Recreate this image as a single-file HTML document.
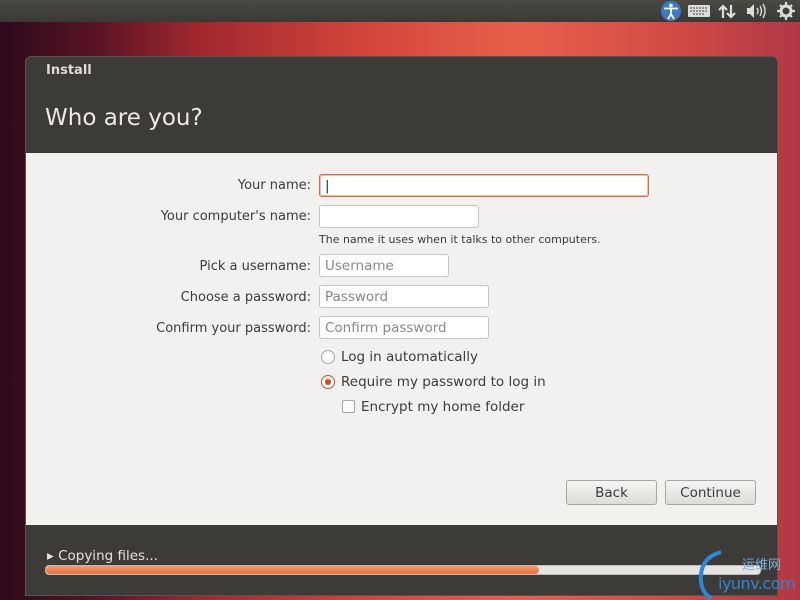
<!DOCTYPE html>
<html><head><style>
*{box-sizing:border-box;margin:0;padding:0}
body{width:800px;height:600px;overflow:hidden;position:relative;font-family:"DejaVu Sans","Liberation Sans",sans-serif;background:linear-gradient(90deg,#2c0a1c 0%,#5a1423 12%,#a0282e 25%,#d2453a 45%,#e8604a 65%,#d04a45 85%,#b03845 100%)}
.panel{position:absolute;left:0;top:0;width:800px;height:22px;background:linear-gradient(#4a4944,#3a3935);}
.win{position:absolute;left:25px;top:56px;width:753px;height:540px;background:#3c3b37;border-radius:6px 6px 0 0;border:1px solid #55544f}
.t1{position:absolute;left:20px;top:6px;color:#dfdbd2;font-weight:bold;font-size:13px}
.t2{position:absolute;left:19px;top:48px;color:#eeeae3;font-size:23px}
.content{position:absolute;left:0;top:96px;width:751px;height:372px;background:#f2f1f0}
.lbl{position:absolute;right:466px;font-size:13px;color:#3c3c3c;white-space:nowrap}
.inp{position:absolute;left:293px;height:23px;background:#fff;border:1px solid #c8c6c2;border-radius:3px;font-size:13.5px;color:#8a8a8a;padding:3px 0 0 5px}
.txt{position:absolute;font-size:13.5px;color:#3c3c3c;white-space:nowrap}
.rad{position:absolute;width:14px;height:14px;border-radius:50%;border:1px solid #a8a6a2;background:#fafafa}
.btn{position:absolute;height:25px;border:1px solid #a8a6a2;border-radius:3px;background:linear-gradient(#f6f5f4,#dedcd8);font-size:13.5px;color:#3c3c3c;text-align:center;padding-top:4px}
</style></head><body>
<div class="panel">
<svg width="800" height="22" style="position:absolute;left:0;top:0">
<circle cx="671" cy="11" r="10" fill="#3d78c4"/><circle cx="671" cy="5.5" r="1.8" fill="#fff"/><path d="M664 8.5h14M671 8.5v6M671 14l-3 5M671 14l3 5" stroke="#fff" stroke-width="1.8" fill="none"/>
<rect x="688" y="5" width="22" height="12" rx="1" fill="#dcdcdc"/><path d="M690 8h18M690 11h18M693 14h12" stroke="#444" stroke-width="1" stroke-dasharray="2 1"/>
<path d="M723 18V6M719 10l4-4 4 4M731 5v12M727 13l4 4 4-4" stroke="#ddd" stroke-width="2.2" fill="none"/>
<path d="M747 8h3l4-4v14l-4-4h-3z" fill="#ddd"/><path d="M757 8q2 3 0 6M760 6q3 5 0 10M763 4q4 7 0 14" stroke="#ddd" stroke-width="1.4" fill="none"/>
<circle cx="786" cy="11" r="5" fill="none" stroke="#ddd" stroke-width="3"/><path d="M786 2v4M786 16v4M777 11h4M791 11h4M780 5l2.5 2.5M792 17l-2.5-2.5M792 5l-2.5 2.5M780 17l2.5-2.5" stroke="#ddd" stroke-width="2.2"/>
</svg></div>
<div class="win">
<div class="t1">Install</div>
<div class="t2">Who are you?</div>
<div class="content">
<div class="lbl" style="top:25px">Your name:</div>
<div class="inp" style="top:21px;width:330px;border-color:#d66a43;box-shadow:0 0 0 1px #f0c0a8 inset;color:#333">|</div>
<div class="lbl" style="top:56px">Your computer's name:</div>
<div class="inp" style="top:52px;width:160px"></div>
<div class="txt" style="left:293px;top:80px;font-size:11px">The name it uses when it talks to other computers.</div>
<div class="lbl" style="top:106px">Pick a username:</div>
<div class="inp" style="top:101px;width:130px">Username</div>
<div class="lbl" style="top:137px">Choose a password:</div>
<div class="inp" style="top:132px;width:170px">Password</div>
<div class="lbl" style="top:168px">Confirm your password:</div>
<div class="inp" style="top:163px;width:170px">Confirm password</div>
<div class="rad" style="left:295px;top:197px"></div><div class="txt" style="left:315px;top:196px">Log in automatically</div>
<div class="rad" style="left:295px;top:222px;border-color:#c0502a;background:#fff"><div style="position:absolute;left:3px;top:3px;width:6px;height:6px;border-radius:50%;background:#dd4814"></div></div><div class="txt" style="left:315px;top:221px">Require my password to log in</div>
<div style="position:absolute;left:316px;top:247px;width:13px;height:13px;border:1px solid #a8a6a2;border-radius:2px;background:#fafafa"></div><div class="txt" style="left:335px;top:246px">Encrypt my home folder</div>
<div class="btn" style="left:540px;top:327px;width:91px">Back</div>
<div class="btn" style="left:639px;top:327px;width:91px">Continue</div>
</div>
<div class="txt" style="left:21px;top:491px;color:#e6e2da;font-size:13.5px">▸ Copying files...</div>
<div style="position:absolute;left:19px;top:508px;width:716px;height:10px;border-radius:4px;background:#e6e4e0;border:1px solid #bdb9b3"><div style="width:493px;height:8px;border-radius:4px;background:linear-gradient(#f39a6c,#e66f3f)"></div></div>
</div>
<div style="position:absolute;left:742px;top:554px;color:#7db0da;font-size:13px">运维网</div>
<div style="position:absolute;left:718px;top:574px;color:#2b86d6;font-size:16px;letter-spacing:-0.5px">iyunv.com</div>
<svg width="40" height="50" style="position:absolute;left:693px;top:550px"><path d="M28 2Q6 8 8 32Q10 44 18 48" stroke="#2b8ad8" stroke-width="4" fill="none"/></svg>
</body></html>
